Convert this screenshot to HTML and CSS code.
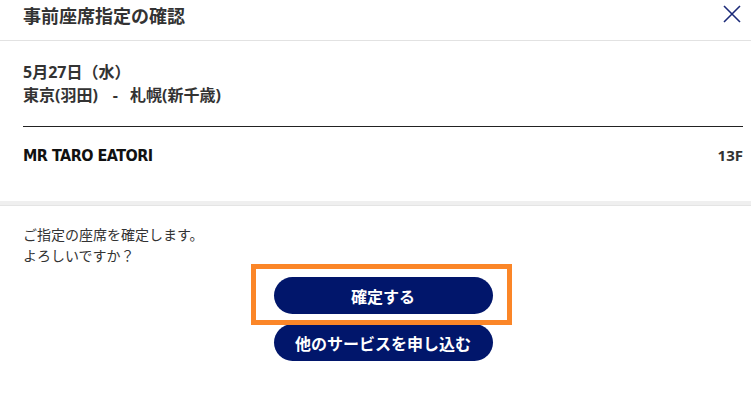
FILE: index.html
```html
<!DOCTYPE html>
<html lang="ja">
<head>
<meta charset="utf-8">
<title>事前座席指定の確認</title>
<link rel="stylesheet" href="styles.css">
</head>
<body>
<div class="dialog">
  <header class="header">
    <h1 class="title">事前座席指定の確認</h1>
    <button class="close" aria-label="閉じる">
      <svg width="18" height="18" viewBox="0 0 18 18"><path d="M1 1L17 17M17 1L1 17" stroke="#1b2a78" stroke-width="1.6" fill="none"/></svg>
    </button>
  </header>
  <section class="info">
    <p class="date">5月27日（水）</p>
    <p class="route">東京(羽田)<span class="sep">-</span>札幌(新千歳)</p>
    <div class="passenger">
      <span class="name">MR TARO EATORI</span>
      <span class="seat">13F</span>
    </div>
  </section>
  <div class="band"></div>
  <section class="confirm">
    <p class="message">ご指定の座席を確定します。<br>よろしいですか？</p>
    <div class="actions">
      <div class="primary-wrap">
        <button class="btn">確定する</button>
        <span class="highlight"></span>
      </div>
      <button class="btn">他のサービスを申し込む</button>
    </div>
  </section>
</div>
</body>
</html>
```
FILE: styles.css
```css
html, body {
  margin: 0;
  padding: 0;
  background: #fff;
}
body {
  font-family: "Noto Sans", "Noto Sans CJK JP", sans-serif;
  color: #333;
}
.dialog {
  width: 751px;
}
.header {
  position: relative;
  height: 41px;
  box-sizing: border-box;
  border-bottom: 1px solid #e2e2e2;
  padding: 2px 0 0 23px;
}
.title {
  margin: 0;
  font-size: 18px;
  line-height: 27px;
  font-weight: 700;
  color: #333;
  font-family: "Noto Sans CJK JP", sans-serif;
}
.close {
  position: absolute;
  top: 5px;
  right: 10px;
  width: 18px;
  height: 18px;
  padding: 0;
  border: 0;
  background: none;
}
.close svg {
  display: block;
}
.info {
  padding: 20px 8px 0 23px;
}
.date, .route {
  margin: 0;
  font-size: 16px;
  line-height: 23px;
  font-weight: 700;
  font-family: "Noto Sans", "Noto Sans CJK JP", sans-serif;
}
.route {
  padding-bottom: 19px;
  border-bottom: 1px solid #222;
}
.sep {
  margin: 0 12px 0 15px;
}
.passenger {
  display: flex;
  justify-content: space-between;
  align-items: center;
  height: 24px;
  margin-top: 16px;
  margin-bottom: 34px;
}
.name {
  font-family: "DejaVu Sans Condensed", "DejaVu Sans", sans-serif;
  font-stretch: condensed;
  font-weight: 700;
  font-size: 16px;
  color: #111;
  letter-spacing: -0.5px;
}
.seat {
  font-size: 15px;
  font-weight: 700;
  color: #333;
}
.band {
  height: 4px;
  background: #efefef;
  border-bottom: 1px solid #e4e4e4;
}
.confirm {
  padding: 18px 8px 0 23px;
}
.message {
  margin: 0;
  font-size: 14px;
  line-height: 21px;
  color: #333;
  font-family: "Noto Sans CJK JP", sans-serif;
}
.actions {
  display: flex;
  flex-direction: column;
  align-items: center;
  gap: 10px;
  margin-top: 11px;
}
.primary-wrap {
  position: relative;
}
.btn {
  display: block;
  width: 219px;
  height: 37px;
  border: 0;
  border-radius: 19px;
  background: #01166b;
  color: #fff;
  font-family: "Noto Sans CJK JP", sans-serif;
  font-weight: 700;
  font-size: 16px;
  padding: 0;
}
.highlight {
  position: absolute;
  left: -23px;
  right: -19px;
  top: -13px;
  bottom: -11px;
  border: 5px solid #fb8628;
  pointer-events: none;
}
```
